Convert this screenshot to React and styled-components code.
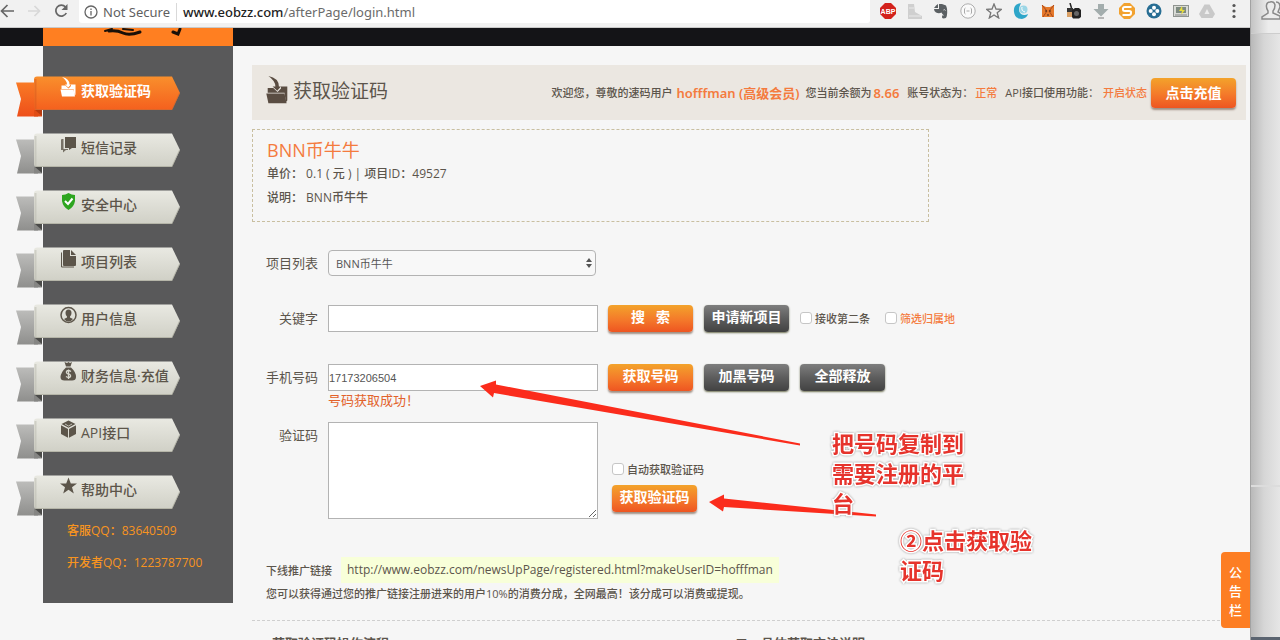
import React from "react";
import styled, { createGlobalStyle, css } from "styled-components";

const Global = createGlobalStyle`
  *, *::before, *::after { box-sizing: border-box; }
  body {
    margin: 0;
    overflow: hidden;
    background: #f6f6f6;
    color: #5c554c;
    font-family: "Open Sans", "Noto Sans CJK SC", sans-serif;
    font-size: 11px;
  }
  a { color: inherit; text-decoration: none; }
  button, input, select, textarea { font-family: inherit; margin: 0; }
`;

/* ---------- frame ---------- */

const Screen = styled.div`
  display: flex;
  height: 100vh;
  overflow: hidden;
`;

const Browser = styled.div`
  position: relative;
  flex: 1;
  min-width: 0;
  overflow: hidden;
  background: #f6f6f6;
`;

const Desktop = styled.aside`
  display: flex;
  flex-direction: column;
  width: 30px;
  border-left: 1px solid #a2a2a2;
  background: linear-gradient(90deg, #b9b9b9, #d6d6d6 45%, #e6e6e6);
`;

const DesktopHead = styled.div`
  height: 34px;
  padding-left: 9px;
  overflow: hidden;
  border-bottom: 1px solid #cdcdcd;
  background: linear-gradient(90deg, #c4c4c4, #ececec 60%);
`;

const DesktopPane = styled.div`
  flex: 3;
  border-bottom: 2px solid #dcdcdc;
`;

const DesktopFoot = styled.div`
  flex: 1;
  border-bottom: 3px solid #5b6470;
`;

/* ---------- browser toolbar ---------- */

const Toolbar = styled.header`
  display: flex;
  align-items: flex-start;
  height: 28px;
  padding-right: 8px;
  background: #f1f1f1;
  border-bottom: 1px solid #c9c9c9;
`;

const NavButtons = styled.nav`
  display: flex;
  align-items: center;
  gap: 11px;
  width: 79px;
  height: 22px;
`;

const IconButton = styled.button`
  display: flex;
  padding: 0;
  border: 0;
  background: none;
`;

const Address = styled.div`
  display: flex;
  align-items: center;
  flex: 1;
  height: 23px;
  padding-left: 5px;
  border-radius: 0 0 3px 3px;
  background: #fff;
  color: #6b6b6b;
  font-family: "Noto Sans", sans-serif;
  font-size: 13px;
  line-height: 22px;
`;

const Secure = styled.span`
  margin: 0 6px 0 5px;
  padding-right: 6px;
  border-right: 1px solid #d9d9d9;
  line-height: 18px;
  color: #5f5f5f;
`;

const Host = styled.strong`
  color: #222;
  font-weight: 500;
`;

const Extensions = styled.div`
  display: flex;
  align-items: center;
  justify-content: space-between;
  width: 362px;
  height: 22px;
  margin-left: 10px;
`;

/* ---------- page header ---------- */

const Band = styled.div`
  height: 18px;
  padding-left: 43px;
  background: #141417;
`;

const Logo = styled.div`
  width: 190px;
  height: 18px;
  background: #ff7f21;
  svg { display: block; }
`;

const Page = styled.div`
  display: flex;
  align-items: flex-start;
  padding-left: 43px;
`;

/* ---------- sidebar ---------- */

const Sidebar = styled.aside`
  flex: none;
  width: 190px;
  height: 557px;
  padding-top: 30px;
  background: #59595a;
`;

const Menu = styled.nav`
  display: flex;
  flex-direction: column;
  gap: 15px;
  width: 164px;
  margin-left: -27px;
`;

const RibbonLink = styled.a`
  position: relative;
  display: flex;
  align-items: flex-start;
  gap: 4px;
  height: 42px;
  padding-left: 44px;
  color: ${(p) => (p.$active ? "#fff" : "#5c554a")};
  font-size: 14px;
  font-weight: ${(p) => (p.$active ? 700 : 500)};
  line-height: 30px;
  white-space: nowrap;
`;

const RibbonShape = styled.svg`
  position: absolute;
  inset: 0;
`;

const RibbonIcon = styled.svg`
  position: relative;
  flex: none;
  margin-top: 1px;
`;

const RibbonText = styled.span`
  position: relative;
`;

const Contact = styled.p`
  margin: 0 0 10px 24px;
  color: #f7941f;
  font-size: 12px;
  font-weight: 500;
  line-height: 22px;
`;

const Contacts = styled.div`
  padding-top: 3px;
`;

/* ---------- main ---------- */

const Main = styled.main`
  flex: 1;
  min-width: 0;
  margin-left: 19px;
  padding-top: 19px;
`;

const TitleBar = styled.div`
  display: flex;
  align-items: center;
  justify-content: space-between;
  height: 55px;
  margin-right: 4px;
  padding: 0 10px 0 13px;
  background: #ebe7e1;
`;

const Title = styled.h1`
  display: flex;
  align-items: center;
  gap: 3px;
  margin: 0;
  padding-bottom: 6px;
  font-size: 19px;
  font-weight: 400;
`;

const Status = styled.div`
  display: flex;
  align-items: center;
  color: #5c554c;
  font-weight: 500;
  line-height: 20px;
  white-space: nowrap;
`;

const Piece = styled.span`
  margin-right: ${(p) => p.$gap || 0}px;
`;

const Accent = styled.span`
  color: #f47b3e;
  font-family: "Noto Sans", "Noto Sans CJK SC", sans-serif;
  font-size: ${(p) => (p.$large ? 13 : 11)}px;
  font-weight: ${(p) => (p.$large ? 600 : 500)};
  margin-right: ${(p) => p.$gap || 0}px;
`;

const tones = {
  orange: css`
    background: linear-gradient(#f3a32b, #f4792a 55%, #ee5521);
    box-shadow: 0 2px 2px #a08f83;
  `,
  gray: css`
    background: linear-gradient(#7e7e7e, #5d5d5d 50%, #424242);
    box-shadow: 0 1px 2px #6d7052;
  `,
};

const Button = styled.button`
  width: 85px;
  height: ${(p) => (p.$tall ? 30 : 27)}px;
  padding: ${(p) => (p.$tall ? "0" : "0 0 4px")};
  border: 0;
  border-radius: 4px;
  color: #fff;
  font-size: 14px;
  font-weight: 700;
  line-height: 22px;
  white-space: pre;
  ${(p) => tones[p.$tone || "orange"]}
`;

const Project = styled.section`
  max-width: 677px;
  height: 93px;
  margin-top: 9px;
  padding: 8px 14px;
  border: 1px dashed #c9bfa0;
  font-weight: 500;
`;

const ProjectName = styled.h2`
  margin: 0;
  color: #f47b3e;
  font-size: 18px;
  font-weight: 400;
  line-height: 24px;
`;

const ProjectLine = styled.p`
  margin: 0;
  font-size: 12px;
  line-height: 24px;
  white-space: pre;
`;

const Form = styled.form`
  display: flex;
  flex-direction: column;
  padding-top: 28px;
`;

const Row = styled.div`
  display: flex;
  align-items: flex-start;
  margin-bottom: ${(p) => p.$after || 0}px;
`;

const Label = styled.label`
  flex: none;
  width: 66px;
  margin-right: 10px;
  font-size: 13px;
  line-height: 26px;
  text-align: right;
`;

const field = css`
  display: block;
  border: 1px solid #b3b3b3;
  border-radius: 0;
  background: #fff;
  color: #555;
`;

const TextInput = styled.input`
  ${field}
  width: 270px;
  height: 27px;
  padding: 0;
  font-family: "Liberation Sans", sans-serif;
  font-size: 11px;
`;

const TextArea = styled.textarea`
  ${field}
  width: 270px;
  height: 97px;
  resize: both;
`;

const SelectBox = styled.div`
  position: relative;
  width: 268px;
  height: 26px;
`;

const Select = styled.select`
  ${field}
  width: 100%;
  height: 26px;
  padding: 0 7px;
  border-radius: 4px;
  background: #f8f8f8;
  font-size: 11px;
  appearance: none;
`;

const SelectArrows = styled.svg`
  position: absolute;
  top: 8px;
  right: 4px;
  pointer-events: none;
`;

const Actions = styled.div`
  display: flex;
  gap: 11px;
  margin-left: 10px;
`;

const Check = styled.label`
  display: flex;
  align-items: center;
  gap: 3px;
  height: 26px;
  margin-right: ${(p) => p.$after || 0}px;
  color: ${(p) => (p.$accent ? "#f47b3e" : "inherit")};
  font-weight: 500;
`;

const Tick = styled.input`
  appearance: none;
  width: 12px;
  height: 12px;
  border: 1px solid #c6c6c6;
  border-radius: 3px;
  background: #fff;
`;

const Message = styled.p`
  margin: 0 0 12px 76px;
  color: #e2622b;
  font-size: 13px;
  line-height: 19px;
`;

const CodeActions = styled.div`
  display: flex;
  flex-direction: column;
  gap: 3px;
  margin-left: 14px;
  padding-top: 34px;
`;

const Promo = styled.section`
  padding: 38px 0 15px 14px;
  border-bottom: 1px dashed #cfcfcf;
  font-weight: 500;
`;

const PromoRow = styled.div`
  display: flex;
  align-items: center;
  gap: 9px;
  height: 26px;
`;

const PromoLink = styled.a`
  padding: 0 6px;
  background: #f8ffd9;
  font-size: 12px;
  font-weight: 400;
  line-height: 26px;
`;

const PromoNote = styled.p`
  margin: 0;
  line-height: 22px;
`;

const Guides = styled.div`
  display: grid;
  grid-template-columns: 463px 1fr;
  padding: 13px 0 0 20px;
`;

const GuideTitle = styled.h3`
  margin: 0;
  font-size: 13px;
  font-weight: 700;
  line-height: 18px;
`;

/* ---------- overlays ---------- */

const NoticeTab = styled.button`
  position: absolute;
  right: 0;
  bottom: 12px;
  width: 29px;
  height: 76px;
  padding: 2px 8px 0;
  border: 0;
  border-radius: 4px 0 0 4px;
  background: #fd7e23;
  color: #fff;
  font-size: 13px;
  font-weight: 500;
  line-height: 19px;
`;

const Arrows = styled.svg`
  position: absolute;
  top: 0;
  left: 0;
  pointer-events: none;
`;

const Note = styled.p`
  position: absolute;
  top: ${(p) => p.$top}px;
  left: ${(p) => p.$left}px;
  width: 136px;
  margin: 0;
  color: #e6332c;
  font-family: "Noto Sans CJK SC", sans-serif;
  font-size: 22px;
  font-weight: 700;
  line-height: 30px;
  paint-order: stroke fill;
  -webkit-text-stroke: 3px #fff;
  filter: drop-shadow(0 0 1px #999);
`;

/* ---------- drawings ---------- */

function Ribbon({ active }) {
  const id = active ? "on" : "off";
  return (
    <RibbonShape width="164" height="42" viewBox="0 0 164 42" aria-hidden="true">
      <defs>
        <linearGradient id={`body-${id}`} x1="0" y1="0" x2="0" y2="1">
          <stop offset="0" stopColor={active ? "#f98f2c" : "#e9e9e2"} />
          <stop offset="1" stopColor={active ? "#f5601e" : "#d0d0c6"} />
        </linearGradient>
        <linearGradient id={`tail-${id}`} x1="0" y1="0" x2="0" y2="1">
          <stop offset="0" stopColor={active ? "#f97a25" : "#bcbcba"} />
          <stop offset="1" stopColor={active ? "#ee4f1a" : "#8f8f8d"} />
        </linearGradient>
      </defs>
      <path d="M0 6.500H22V40.500H1L5 23Z" fill={`url(#tail-${id})`} />
      <path d="M18 34H26V40.500H18Z" fill={active ? "#e04c15" : "#858583"} />
      <path d="M19 34H26V40Z" fill={active ? "#b83c10" : "#4a4a48"} />
      <path d="M21 .5H156L164 17L156 34H21Q18 34 18 31V3.500Q18 .5 21 .5Z" fill={`url(#body-${id})`} />
      <path d="M19 33.500H156L163.500 17" fill="none" stroke={active ? "#ce6a32" : "#aaa99b"} strokeWidth="1" opacity=".7" />
      <path d="M19.500 3V33" stroke={active ? "#d75a20" : "#b9b9ae"} strokeWidth="2" opacity=".5" />
    </RibbonShape>
  );
}

const inbox = (
  <>
    <path d="M1.500 8.500H5.500L8.500 11.500L11 9V7.500H15.500V17.500L14.500 18.500L13.500 12H1.500Z" />
    <path d="M.5 12.500H13.500L15 19.500H2Z" />
    <path d="M2 0Q9.500 1.500 9.500 7.500H11L8.300 10.500L5 7.500H7Q7 3.500 2 0Z" />
  </>
);

const icons = {
  inbox,
  chat: (
    <>
      <path d="M5 3H16V14H12L9 16V14H5Z" />
      <path d="M3.500 5H2Q1 5 1 6V16H3V18.500L6 16H8V15H3.500Z" opacity=".8" />
    </>
  ),
  shield: (
    <>
      <path d="M8.500 2Q11.500 4 15 4V10Q14 16 8.500 19Q3 16 2 10V4Q5.500 4 8.500 2Z" fill="#2da51f" />
      <path d="M5 10L8 13L12.500 7.500" stroke="#fff" strokeWidth="2" fill="none" />
    </>
  ),
  files: (
    <>
      <path d="M4 2H10V8H16V17Q16 18 15 18H4Q3 18 3 17V3Q3 2 4 2Z" />
      <path d="M11 2L16 7H11Z" />
      <path d="M1.500 4.500V19H14" fill="none" stroke="currentColor" />
    </>
  ),
  user: (
    <>
      <circle cx="8.500" cy="10" r="7.500" fill="none" stroke="currentColor" strokeWidth="1.500" />
      <path d="M8.500 4.500Q11.500 4.500 11.500 8Q11.500 10 10 11.500V12.500L13 14Q11 16.500 8.500 16.500Q6 16.500 4 14L7 12.500V11.500Q5.500 10 5.500 8Q5.500 4.500 8.500 4.500Z" />
    </>
  ),
  money: (
    <>
      <path d="M4.500 0L7 1L8.500 0L10 1L12 0L10.500 4.500H6Z" />
      <path d="M6 5.500H11Q16 10 16 15Q16 18.500 12 18.500H4.500Q.5 18.500 .5 15Q1 10 6 5.500Z" />
      <path d="M11 9.500Q8 7.500 6.500 9.500Q6 11.500 8.500 12Q11 12.500 10.500 14.500Q9 16.500 6 14.500M8.500 7.500V17" fill="none" stroke="#d8d8ce" strokeWidth="1.300" />
    </>
  ),
  cube: (
    <>
      <path d="M8.500 1.500L15.500 5L8.500 8.800L1.500 5Z" />
      <path d="M1 6.200L8 10V18.800L1 15Z" />
      <path d="M16 6.200L9 10V18.800L16 15Z" />
      <path d="M5 5L8.500 7L12 5" stroke="#d8d8ce" strokeWidth=".8" fill="none" />
    </>
  ),
  star: <path d="M8.500 1.500L10.800 7.500H17L12 11.300L13.800 17.500L8.500 13.800L3.200 17.500L5 11.300L0 7.500H6.200Z" />,
};

const menu = [
  ["inbox", "获取验证码"],
  ["chat", "短信记录"],
  ["shield", "安全中心"],
  ["files", "项目列表"],
  ["user", "用户信息"],
  ["money", "财务信息·充值"],
  ["cube", "API接口"],
  ["star", "帮助中心"],
];

const extensions = [
  ["Adblock Plus", <><path d="M5 0H11L16 5V11L11 16H5L0 11V5Z" fill="#d3221c" /><text x="8" y="11" textAnchor="middle" fontSize="7" fontWeight="700" fill="#fff" fontFamily="Liberation Sans, sans-serif">ABP</text></>],
  ["Boot", <><path d="M1 1H7L8 9L15 13V16H1Z" fill="#cfcfcf" /><path d="M2 5H7M2 13H14" stroke="#e9e9e9" /></>],
  ["Evernote", <><path d="M5 1V5H1Q3 2 5 1Z" fill="#5b6063" /><path d="M6 1H9L13 2.500Q15 7 13.800 13Q13.500 15.500 10.500 15.500Q8.500 15 9 12.500L11 12.500Q9 11 8.500 9.500Q6 11 3 9.500Q1 8 1 6H6Z" fill="#5b6063" /><path d="M10.500 7Q11.500 6 12.500 7.500" stroke="#ddd" fill="none" /></>],
  ["JSON", <><circle cx="8" cy="8" r="7.200" fill="#fafafa" stroke="#adadad" /><path d="M5.500 5Q4 5 4.500 8Q4 11 5.500 11M10.500 5Q12 5 11.500 8Q12 11 10.500 11M6.500 8H9.500" fill="none" stroke="#aaa" /></>],
  ["Bookmark", <path d="M8 1L10 6L15.500 6.300L11.200 9.700L12.700 15L8 12L3.300 15L4.800 9.700L.5 6.300L6 6Z" fill="none" stroke="#777" strokeWidth="1.300" />],
  ["Moon", <><path d="M8 0Q0 1 1 9Q2 16 9 16Q14 15 15 11Q11 13 8 11Q4 8 8 0Z" fill="#2ea6c9" /><circle cx="10.500" cy="6.500" r="4" fill="#9bd6e6" /><path d="M9 4Q8 8 12 9" stroke="#fff" fill="none" /></>],
  ["Fox", <><path d="M2 2L6 4H10L14 2V14H2Z" fill="#e5792b" /><path d="M2 2L7 8L3 14M14 2L9 8L13 14" stroke="#a9471a" fill="none" /><path d="M5 8H7M9 8H11M7 12H9" stroke="#40261a" /></>],
  ["Camera", <><path d="M4 0L5.500 5" stroke="#222" strokeWidth="1.500" /><path d="M1 5H7V9H1Z" fill="#333" /><rect x="1" y="9" width="6" height="5" fill="#d9a066" /><path d="M6 7L9 5H13L15 7V14L13 15.500H7L6 14Z" fill="#222" /><circle cx="10.500" cy="10.500" r="2.500" fill="#666" /></>],
  ["Download", <><path d="M5 1H11V6H15.500L8 13.500L.5 6H5Z" fill="#a3adad" /><path d="M5 15H11" stroke="#b5b5b5" strokeWidth="2" /></>],
  ["S", <><path d="M5 0H11L16 5V11L11 16H5L0 11V5Z" fill="#f2a22f" /><path d="M12.500 4H6Q3.500 4 4 6.500Q4 8 6 8H10Q12.500 8 12 10Q12 12 10 12H3.500" fill="none" stroke="#fff" strokeWidth="2" /></>],
  ["Clover", <><circle cx="8" cy="8" r="7.500" fill="#286e94" /><g fill="#fff"><circle cx="8" cy="4.700" r="2" /><circle cx="8" cy="11.300" r="2" /><circle cx="4.700" cy="8" r="2" /><circle cx="11.300" cy="8" r="2" /></g></>],
  ["Screenshot", <><rect x=".5" y="2.500" width="15" height="11" fill="#d9dbd6" stroke="#8f9490" /><rect x="3" y="4" width="10" height="6" fill="#7d8a80" /><path d="M9 3L6 8H9L8 12L12 7H9.500Z" fill="#e8dc3a" /><path d="M2 12H14" stroke="#888" /></>],
  ["Drive", <><path d="M5.500 1.500H10.500L16 11L13.500 15H2.500L0 11Z" fill="#c9c9c9" /><path d="M8 6L5.500 11H10.500Z" fill="#eee" /></>],
  ["Menu", <g fill="#555"><circle cx="8" cy="2.500" r="1.600" /><circle cx="8" cy="8" r="1.600" /><circle cx="8" cy="13.500" r="1.600" /></g>],
];

/* ---------- page ---------- */

function BrowserToolbar() {
  return (
    <Toolbar>
      <NavButtons>
        <IconButton aria-label="Back">
          <svg width="16" height="16" viewBox="0 0 16 16" fill="none" stroke="#666" strokeWidth="1.700"><path d="M14 8H2M7.500 2L1.500 8L7.500 14" /></svg>
        </IconButton>
        <IconButton aria-label="Forward">
          <svg width="16" height="16" viewBox="0 0 16 16" fill="none" stroke="#d8d8d8" strokeWidth="1.700"><path d="M1 8H13M7.500 3L12.500 8L7.500 13" /></svg>
        </IconButton>
        <IconButton aria-label="Reload">
          <svg width="16" height="16" viewBox="0 0 16 16" fill="none" stroke="#666" strokeWidth="1.700"><path d="M11.500 4A5.500 5.500 0 1 0 12.300 10" /><path d="M13.500 1V7H7.500Z" fill="#666" stroke="none" /></svg>
        </IconButton>
      </NavButtons>
      <Address>
        <svg width="14" height="14" viewBox="0 0 14 14" fill="none" stroke="#666" strokeWidth="1.300"><circle cx="7" cy="7" r="6" /><path d="M7 6V10.500M7 3.500V5" /></svg>
        <Secure>Not Secure</Secure>
        <span><Host>www.eobzz.com</Host>/afterPage/login.html</span>
      </Address>
      <Extensions>
        {extensions.map(([name, art]) => (
          <IconButton key={name} aria-label={name}>
            <svg width="16" height="16" viewBox="0 0 16 16">{art}</svg>
          </IconButton>
        ))}
      </Extensions>
    </Toolbar>
  );
}

function SideMenu() {
  return (
    <Sidebar>
      <Menu>
        {menu.map(([icon, text], i) => (
          <RibbonLink key={text} href="#" $active={i === 0}>
            <Ribbon active={i === 0} />
            <RibbonIcon width="17" height="20" viewBox="0 0 17 20" fill="currentColor">{icons[icon]}</RibbonIcon>
            <RibbonText>{text}</RibbonText>
          </RibbonLink>
        ))}
      </Menu>
      <Contacts>
        <Contact>客服QQ：83640509</Contact>
        <Contact>开发者QQ：1223787700</Contact>
      </Contacts>
    </Sidebar>
  );
}

export default function App() {
  return (
    <>
      <Global />
      <Screen>
        <Browser>
          <BrowserToolbar />
          <Band>
            <Logo>
              <svg width="190" height="18" viewBox="0 0 190 18" fill="none" stroke="#1a1008" strokeLinecap="round">
                <path d="M62 3L69 1" strokeWidth="2" />
                <path d="M66 3Q74 2 80 5T97 4" strokeWidth="3" />
                <path d="M80 1L90 2" strokeWidth="2" />
                <path d="M130 4L135 6L137 1" strokeWidth="3" />
              </svg>
            </Logo>
          </Band>
          <Page>
            <SideMenu />
            <Main>
              <TitleBar>
                <Title>
                  <svg width="25" height="28" viewBox="0 0 17 20" fill="#5a4d42" aria-hidden="true">{inbox}</svg>
                  获取验证码
                </Title>
                <Status>
                  <Piece $gap={4}>欢迎您，尊敬的速码用户</Piece>
                  <Accent $large $gap={6}>hofffman (高级会员)</Accent>
                  <Piece $gap={2}>您当前余额为</Piece>
                  <Accent $large $gap={8}>8.66</Accent>
                  <Piece $gap={2}>账号状态为：</Piece>
                  <Accent $gap={8}>正常</Accent>
                  <Piece $gap={4}>API接口使用功能：</Piece>
                  <Accent $gap={4}>开启状态</Accent>
                  <Button type="button" $tall>点击充值</Button>
                </Status>
              </TitleBar>

              <Project>
                <ProjectName>BNN币牛牛</ProjectName>
                <ProjectLine>单价： 0.1 ( 元 ) | 项目ID：49527</ProjectLine>
                <ProjectLine>说明： BNN币牛牛</ProjectLine>
              </Project>

              <Form onSubmit={(e) => e.preventDefault()}>
                <Row $after={29}>
                  <Label htmlFor="project">项目列表</Label>
                  <SelectBox>
                    <Select id="project" defaultValue="bnn">
                      <option value="bnn">BNN币牛牛</option>
                    </Select>
                    <SelectArrows width="6" height="10" viewBox="0 0 6 10" fill="#555"><path d="M3 0L6 4H0ZM3 10L0 6H6Z" /></SelectArrows>
                  </SelectBox>
                </Row>
                <Row $after={32}>
                  <Label htmlFor="keyword">关键字</Label>
                  <TextInput id="keyword" />
                  <Actions>
                    <Button type="submit">搜   索</Button>
                    <Button type="button" $tone="gray">申请新项目</Button>
                    <Check $after={4}><Tick type="checkbox" />接收第二条</Check>
                    <Check $accent><Tick type="checkbox" />筛选归属地</Check>
                  </Actions>
                </Row>
                <Row>
                  <Label htmlFor="phone">手机号码</Label>
                  <TextInput id="phone" defaultValue="17173206504" />
                  <Actions>
                    <Button type="button">获取号码</Button>
                    <Button type="button" $tone="gray">加黑号码</Button>
                    <Button type="button" $tone="gray">全部释放</Button>
                  </Actions>
                </Row>
                <Message>号码获取成功！</Message>
                <Row>
                  <Label htmlFor="code">验证码</Label>
                  <TextArea id="code" />
                  <CodeActions>
                    <Check><Tick type="checkbox" />自动获取验证码</Check>
                    <Button type="button">获取验证码</Button>
                  </CodeActions>
                </Row>
              </Form>

              <Promo>
                <PromoRow>
                  <span>下线推广链接</span>
                  <PromoLink href="#">http://www.eobzz.com/newsUpPage/registered.html?makeUserID=hofffman</PromoLink>
                </PromoRow>
                <PromoNote>您可以获得通过您的推广链接注册进来的用户10%的消费分成，全网最高！该分成可以消费或提现。</PromoNote>
              </Promo>

              <Guides>
                <GuideTitle>获取验证码操作流程</GuideTitle>
                <GuideTitle>二、具体获取方法说明</GuideTitle>
              </Guides>
            </Main>
          </Page>

          <Arrows width="900" height="540" viewBox="0 0 900 540" fill="#fb2c1c">
            <path d="M480 386L496 380.500V384.500L800 443.500V445.500L494 393L493 397.500Z" />
            <path d="M709 502L724 494.500V498.500L876 514.500V516.500L724 507L723 511.500Z" />
          </Arrows>
          <Note $top={427} $left={832}>把号码复制到需要注册的平台</Note>
          <Note $top={524} $left={900}>②点击获取验证码</Note>
          <NoticeTab type="button">公告栏</NoticeTab>
        </Browser>
        <Desktop>
          <DesktopHead>
            <svg width="24" height="22" viewBox="0 0 24 22" fill="none" stroke="#8a8a8a" strokeWidth="1.500">
              <path d="M10 2Q14 1 15 5Q15 9 13 11V13L20 16V19H2V17L8 13V11Q6 8 6.500 5Q7 2 10 2Z" />
              <path d="M16 2Q20 2 20 7L18 12L23 15" />
            </svg>
          </DesktopHead>
          <DesktopPane />
          <DesktopFoot />
        </Desktop>
      </Screen>
    </>
  );
}
